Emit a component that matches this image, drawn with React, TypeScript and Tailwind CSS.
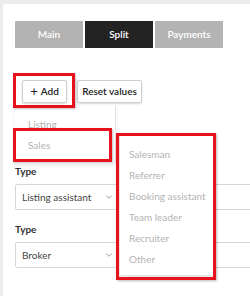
import { ChevronDown } from "lucide-react";

const tabs = [
  { label: "Main", active: false },
  { label: "Split", active: true },
  { label: "Payments", active: false },
];

const roles = ["Salesman", "Referrer", "Booking assistant", "Team leader", "Recruiter", "Other"];

function TypeSelect({ value }: { value: string }) {
  return (
    <div>
      <p className="text-[10px] font-bold leading-none text-[#333]">Type</p>
      <div className="mt-[8px] flex h-[26px] w-[260px] items-center rounded-[2px] border border-[#d6d6d6] bg-white pl-[6px]">
        <span className="w-[82px] whitespace-nowrap text-[10px] text-[#444]">{value}</span>
        <ChevronDown className="h-[10px] w-[10px] text-[#777]" strokeWidth={1.75} />
      </div>
    </div>
  );
}

export default function App() {
  return (
    <div
      className="relative h-[296px] w-[250px] overflow-hidden border-l-[3px] border-t-[4px] border-[#ececec] bg-white"
      style={{ fontFamily: "Lato, 'Open Sans', sans-serif" }}
    >
      <div className="ml-[12px] mt-[17px] flex gap-[2px]">
        {tabs.map((tab) => (
          <div
            key={tab.label}
            className={`flex h-[27px] w-[68px] items-center justify-center text-[10px] font-semibold text-white ${
              tab.active ? "bg-[#232323]" : "bg-[#b3b3b3]"
            }`}
          >
            {tab.label}
          </div>
        ))}
      </div>

      <div className="ml-[19px] mt-[32px] flex gap-[10px]">
        <button className="flex h-[23px] w-[45px] items-center justify-center gap-[3px] rounded-[2px] border border-[#cfcfcf] bg-white text-[10px] font-semibold text-[#222] shadow-[0_1px_2px_rgba(0,0,0,0.15)]">
          <span className="text-[13px] font-normal leading-none">+</span>
          Add
        </button>
        <button className="flex h-[23px] w-[65px] items-center justify-center whitespace-nowrap rounded-[2px] border border-[#cfcfcf] bg-white text-[10px] font-semibold text-[#222] shadow-[0_1px_2px_rgba(0,0,0,0.15)]">
          Reset values
        </button>
      </div>

      <div className="ml-[12px] mt-[63px] flex flex-col gap-[14px]">
        <TypeSelect value="Listing assistant" />
        <TypeSelect value="Broker" />
      </div>

      {/* add menu */}
      <div className="absolute left-[12px] top-[102px] h-[58px] w-[101px] border-r border-[#e2e2e2] bg-white shadow-[0_2px_4px_rgba(0,0,0,0.08)]">
        <div className="flex flex-col pl-[13px] pt-[11px] text-[10px] text-[#b3b3b3]">
          <span className="h-[21px]">Listing</span>
          <span className="h-[21px]">Sales</span>
        </div>
      </div>

      {/* submenu */}
      <div className="absolute left-[116px] top-[130px] h-[142px] w-[95px] border border-[#e4e4e4] bg-white shadow-[0_2px_6px_rgba(0,0,0,0.12)]">
        <div className="flex flex-col pl-[9px] pt-[12px] text-[10px] text-[#b3b3b3]">
          {roles.map((role) => (
            <span key={role} className="h-[21px] whitespace-nowrap leading-[14px]">
              {role}
            </span>
          ))}
        </div>
      </div>

      {/* highlights */}
      <div className="absolute left-[10px] top-[69px] h-[35px] w-[62px] border-[3px] border-[#e8121c] shadow-[1px_1px_2px_rgba(0,0,0,0.25)]" />
      <div className="absolute left-[10px] top-[124px] h-[34px] w-[99px] border-[3px] border-[#e8121c] shadow-[1px_1px_2px_rgba(0,0,0,0.25)]" />
      <div className="absolute left-[113px] top-[129px] h-[147px] w-[100px] border-[3px] border-[#e8121c] shadow-[1px_1px_2px_rgba(0,0,0,0.25)]" />
    </div>
  );
}
